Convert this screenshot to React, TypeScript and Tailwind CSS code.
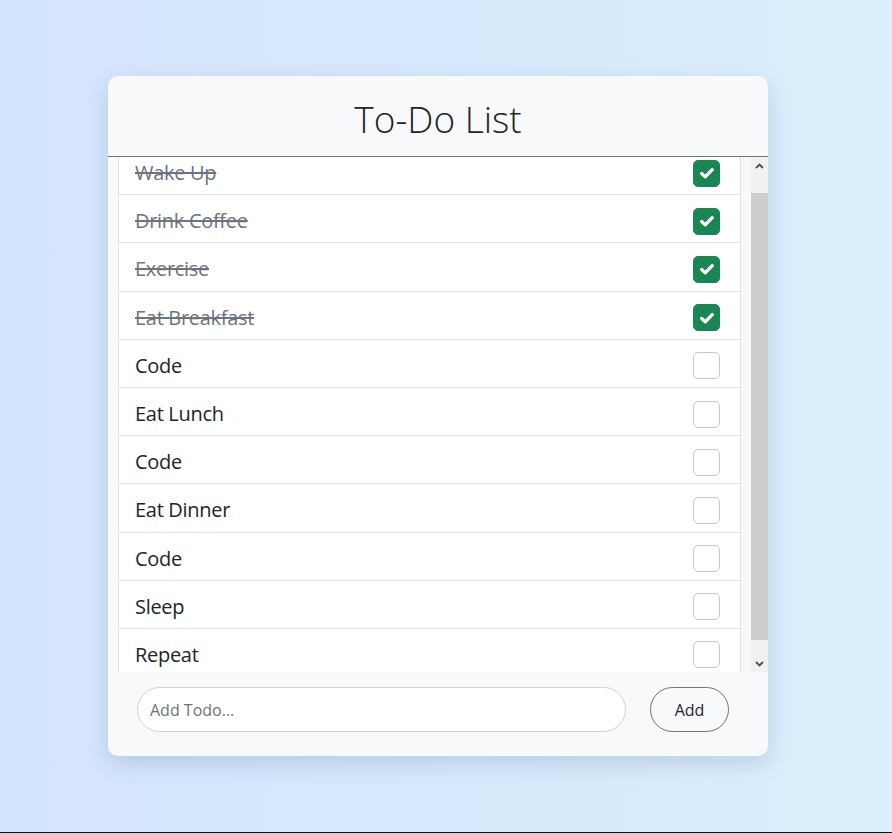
import React, { useEffect, useRef } from "react";

type Todo = { text: string; done: boolean };

const todos: Todo[] = [
  { text: "Wake Up", done: true },
  { text: "Drink Coffee", done: true },
  { text: "Exercise", done: true },
  { text: "Eat Breakfast", done: true },
  { text: "Code", done: false },
  { text: "Eat Lunch", done: false },
  { text: "Code", done: false },
  { text: "Eat Dinner", done: false },
  { text: "Code", done: false },
  { text: "Sleep", done: false },
  { text: "Repeat", done: false },
];

function Check({ done }: { done: boolean }) {
  if (!done) {
    return <div className="w-[27px] h-[27px] rounded-[5px] border border-[#c4c8cc] bg-white" />;
  }
  return (
    <div className="w-[27px] h-[27px] rounded-[5px] bg-[#198754] border border-[#198754] flex items-center justify-center">
      <svg width="22" height="22" viewBox="0 0 20 20">
        <path d="M5.2 10.4l3.2 3.1l6.4-6.6" fill="none" stroke="#fff" strokeWidth="3" strokeLinecap="round" strokeLinejoin="round" />
      </svg>
    </div>
  );
}

// native scrollbars are hidden in the renderer, so the bar is drawn beside the list
function ScrollBar() {
  return (
    <div className="w-[17px] bg-[#f1f1f1] flex flex-col shrink-0">
      <div className="h-[17px] flex items-center justify-center">
        <svg width="9" height="6" viewBox="0 0 9 6">
          <path d="M1 5l3.5-3.5L8 5" fill="none" stroke="#505050" strokeWidth="1.8" />
        </svg>
      </div>
      <div className="flex-1 pt-[19px]">
        <div className="h-[447px] bg-[#cdcdcd]" />
      </div>
      <div className="h-[17px] flex items-center justify-center">
        <svg width="9" height="6" viewBox="0 0 9 6">
          <path d="M1 1l3.5 3.5L8 1" fill="none" stroke="#505050" strokeWidth="1.8" />
        </svg>
      </div>
    </div>
  );
}

export default function App() {
  const listRef = useRef<HTMLDivElement>(null);

  useEffect(() => {
    if (listRef.current) listRef.current.scrollTop = 20;
  }, []);

  return (
    <div className="h-[833px] bg-[#111] font-['Open_Sans','Noto_Sans',sans-serif]">
      <div className="h-[832px] bg-gradient-to-r from-[#d3e4fd] to-[#dbeffc] pl-[108px] pt-[76px]">
        <div className="w-[660px] h-[680px] rounded-[10px] bg-[#f8f9fa] shadow-[0_8px_22px_rgba(40,60,110,0.16)] flex flex-col overflow-hidden">
          <div className="h-[81px] pt-[4px] border-b border-[#6c757d] flex items-center justify-center shrink-0">
            <h1 className="text-[37px] font-light text-[#212529] leading-none">To-Do List</h1>
          </div>
          <div className="h-[515px] flex shrink-0">
            <div ref={listRef} className="flex-1 overflow-hidden px-[10px] py-[10px]">
              <ul className="bg-white border-x border-[#dee2e6]">
                {todos.map((t, i) => (
                  <li
                    key={i}
                    className="h-[48.2px] border-b border-[#dee2e6] flex items-center justify-between pl-[16px] pr-[20px] pt-[5px]"
                  >
                    <span
                      className={
                        t.done
                          ? "text-[20px] tracking-[-0.3px] text-[#6c757d] line-through"
                          : "text-[20px] tracking-[-0.3px] text-[#212529]"
                      }
                    >
                      {t.text}
                    </span>
                    <Check done={t.done} />
                  </li>
                ))}
              </ul>
            </div>
            <ScrollBar />
          </div>
          <form className="flex items-center gap-[24px] pl-[29px] pr-[39px] pt-[15px]" onSubmit={(e) => e.preventDefault()}>
            <input
              className="w-[489px] h-[45px] rounded-full border border-[#ced4da] bg-white px-[12px] text-[16px] text-[#212529] placeholder:text-[#6c757d] outline-none"
              placeholder="Add Todo..."
            />
            <button
              type="submit"
              className="w-[79px] h-[45px] rounded-full border border-[#6c757d] text-[16px] text-[#1a2340]"
            >
              Add
            </button>
          </form>
        </div>
      </div>
    </div>
  );
}
